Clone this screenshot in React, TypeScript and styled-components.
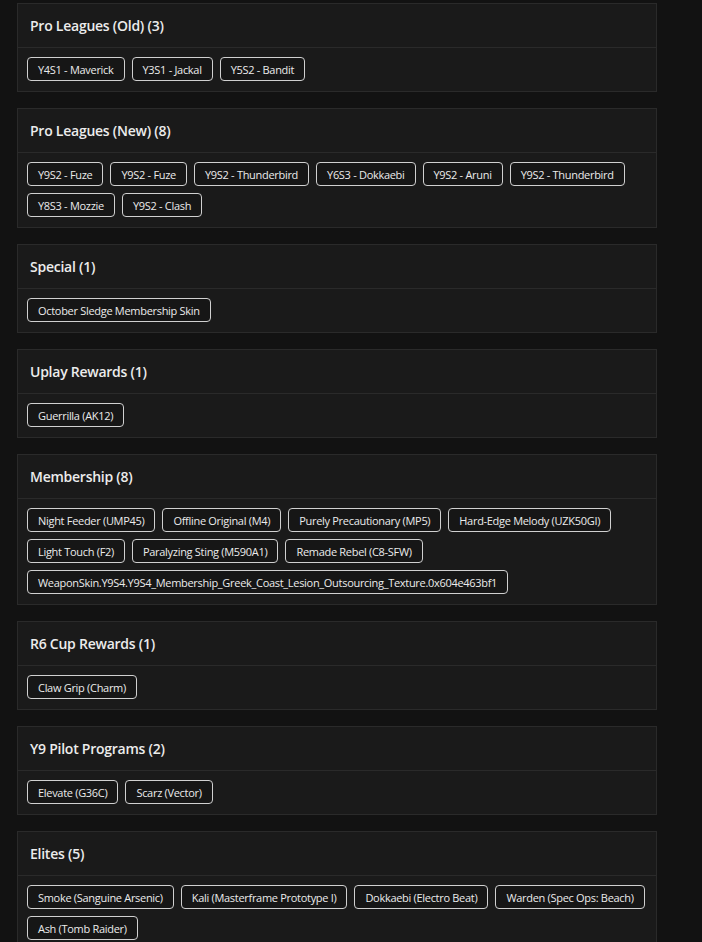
import styled, { createGlobalStyle } from "styled-components"

const GlobalStyle = createGlobalStyle`
  html, body {
    margin: 0;
    padding: 0;
    background: #121212;
  }
  body {
    font-family: "Open Sans", "Liberation Sans", sans-serif;
    color: #e4e4e4;
  }
`

const Page = styled.div`
  padding: 3px 45px 40px 17px;
  display: flex;
  flex-direction: column;
  gap: 16px;
`

const Card = styled.section`
  background: #1a1a1a;
  border: 1px solid #2a2a2a;
`

const CardHeader = styled.div`
  height: 43px;
  display: flex;
  align-items: center;
  padding: 0 12px;
  border-bottom: 1px solid #2a2a2a;
`

const Title = styled.h3`
  margin: 0;
  font-size: 14px;
  font-weight: 600;
  letter-spacing: -0.25px;
  color: #ececec;
`

const CardBody = styled.div`
  padding: 9px 9px 10px;
  display: flex;
  flex-wrap: wrap;
  gap: 7px 7px;
`

const Tag = styled.span`
  height: 24px;
  box-sizing: border-box;
  display: inline-flex;
  align-items: center;
  padding: 0 10px;
  border: 1px solid #d0d0d0;
  border-radius: 4px;
  background: #161616;
  font-size: 11px;
  letter-spacing: -0.3px;
  color: #ebebeb;
  white-space: nowrap;
`

const sections: { title: string; items: string[] }[] = [
  { title: "Pro Leagues (Old)", items: ["Y4S1 - Maverick", "Y3S1 - Jackal", "Y5S2 - Bandit"] },
  {
    title: "Pro Leagues (New)",
    items: [
      "Y9S2 - Fuze",
      "Y9S2 - Fuze",
      "Y9S2 - Thunderbird",
      "Y6S3 - Dokkaebi",
      "Y9S2 - Aruni",
      "Y9S2 - Thunderbird",
      "Y8S3 - Mozzie",
      "Y9S2 - Clash",
    ],
  },
  { title: "Special", items: ["October Sledge Membership Skin"] },
  { title: "Uplay Rewards", items: ["Guerrilla (AK12)"] },
  {
    title: "Membership",
    items: [
      "Night Feeder (UMP45)",
      "Offline Original (M4)",
      "Purely Precautionary (MP5)",
      "Hard-Edge Melody (UZK50GI)",
      "Light Touch (F2)",
      "Paralyzing Sting (M590A1)",
      "Remade Rebel (C8-SFW)",
      "WeaponSkin.Y9S4.Y9S4_Membership_Greek_Coast_Lesion_Outsourcing_Texture.0x604e463bf1",
    ],
  },
  { title: "R6 Cup Rewards", items: ["Claw Grip (Charm)"] },
  { title: "Y9 Pilot Programs", items: ["Elevate (G36C)", "Scarz (Vector)"] },
  {
    title: "Elites",
    items: [
      "Smoke (Sanguine Arsenic)",
      "Kali (Masterframe Prototype I)",
      "Dokkaebi (Electro Beat)",
      "Warden (Spec Ops: Beach)",
      "Ash (Tomb Raider)",
    ],
  },
]

export default function App() {
  return (
    <>
      <GlobalStyle />
      <Page>
        {sections.map((s) => (
          <Card key={s.title}>
            <CardHeader>
              <Title>
                {s.title} ({s.items.length})
              </Title>
            </CardHeader>
            <CardBody>
              {s.items.map((item, i) => (
                <Tag key={i}>{item}</Tag>
              ))}
            </CardBody>
          </Card>
        ))}
      </Page>
    </>
  )
}
